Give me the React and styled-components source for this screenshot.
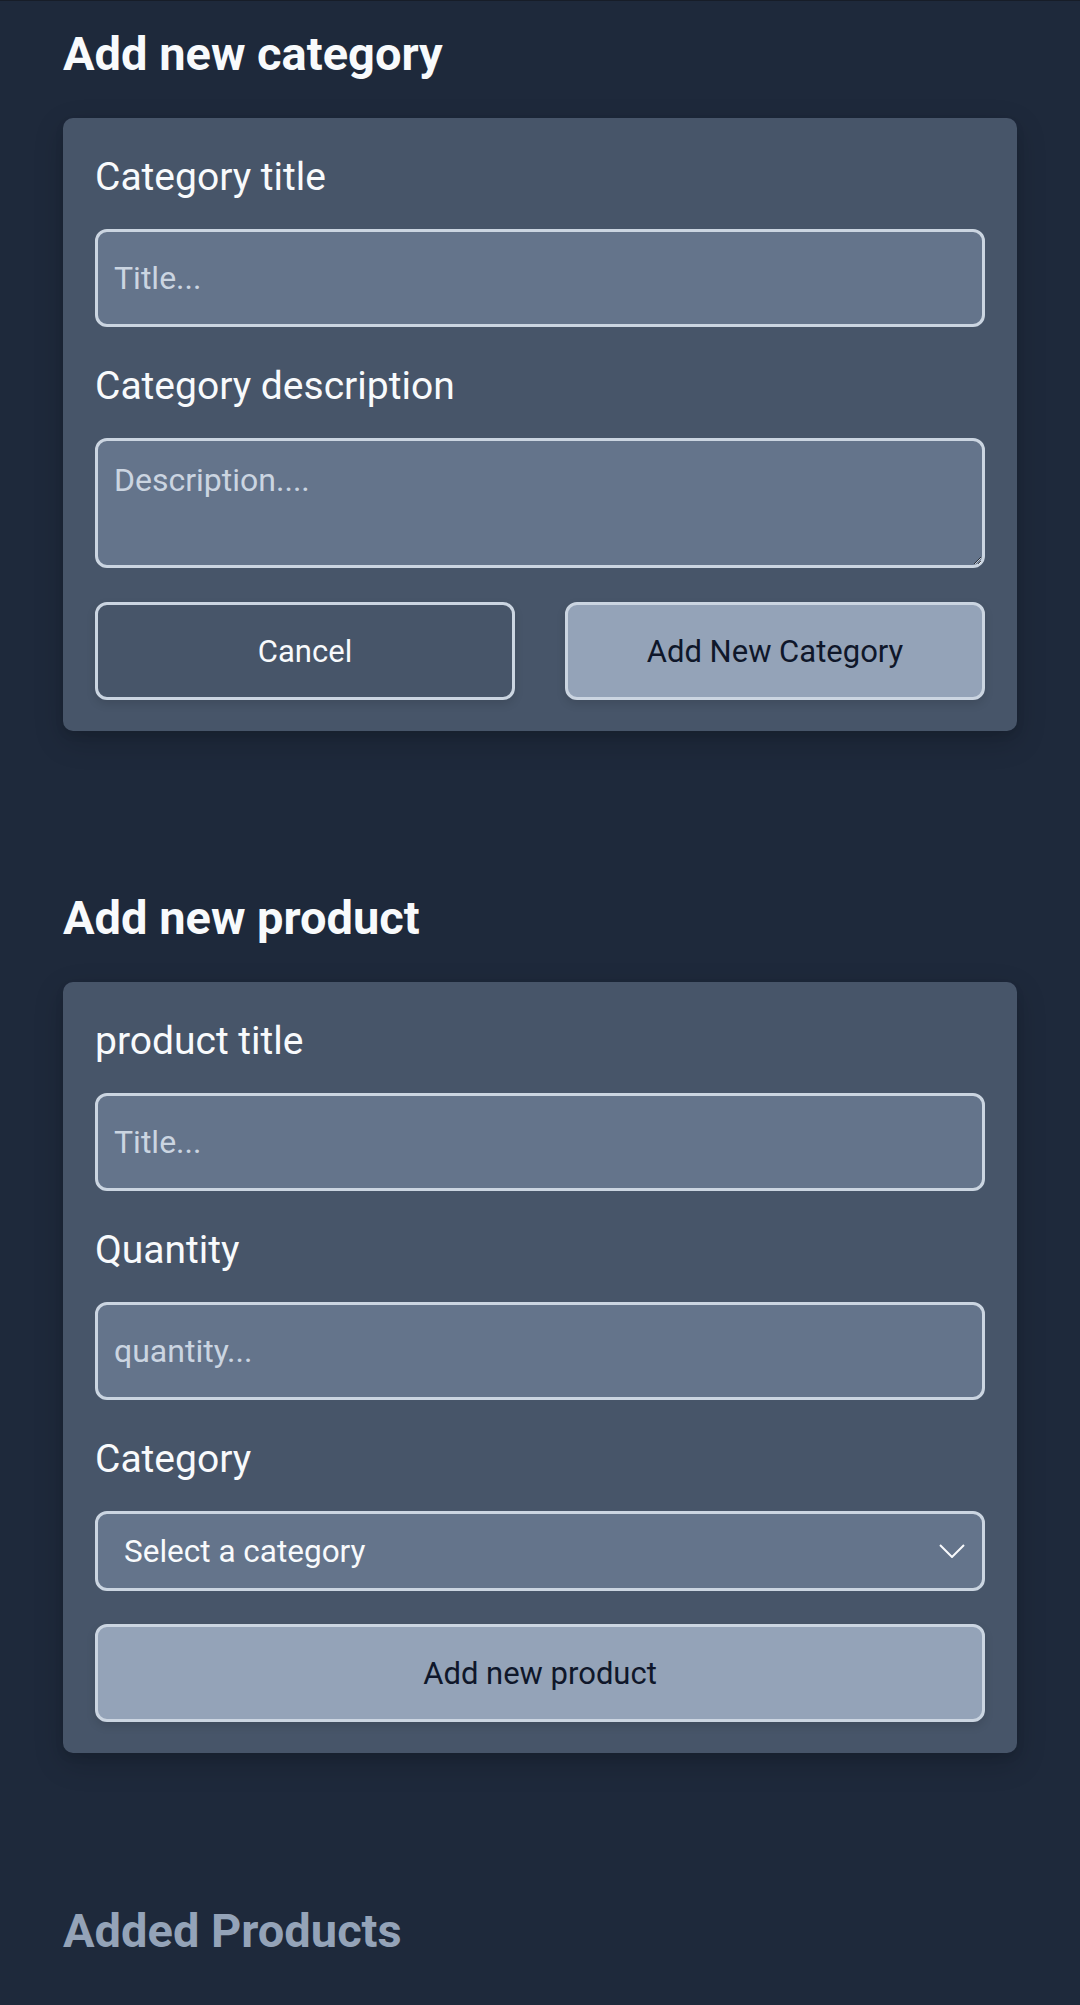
import React from 'react';
import styled, { createGlobalStyle } from 'styled-components';

const GlobalStyle = createGlobalStyle`
  html, body {
    margin: 0;
    padding: 0;
    background: #1e293b;
  }
  body {
    font-family: Roboto, "Liberation Sans", sans-serif;
    min-height: 2005px;
  }
  * {
    box-sizing: border-box;
  }
`;

const Page = styled.main`
  min-height: 2005px;
  background: #1e293b;
  border-top: 1px solid #171d28;
  padding: 25px 63px 40px;
`;

const Section = styled.section`
  margin-bottom: ${({ $space }) => $space || 0}px;
`;

const Heading = styled.h2`
  margin: 0 0 36px;
  font-size: 47px;
  line-height: 56px;
  font-weight: 700;
  color: ${({ $muted }) => ($muted ? '#94a3b8' : '#f8fafc')};
`;

const Card = styled.form`
  display: flex;
  flex-direction: column;
  gap: 31px;
  padding: 31px 32px 31px;
  background: #475569;
  border-radius: 10px;
  box-shadow: 0 10px 30px rgba(0, 0, 0, 0.18), 0 4px 8px rgba(0, 0, 0, 0.08);
`;

const Field = styled.div`
  display: flex;
  flex-direction: column;
  gap: 24px;
`;

const Label = styled.label`
  font-size: 39px;
  line-height: 56px;
  color: #f8fafc;
`;

const inputBase = `
  width: 100%;
  margin: 0;
  font-family: Roboto, "Liberation Sans", sans-serif;
  color: #f8fafc;
  background: #64748b;
  border: 3px solid #cbd5e1;
  border-radius: 12px;
  outline: none;
`;

const TextInput = styled.input`
  ${inputBase}
  height: 98px;
  padding: 0 16px;
  font-size: 32px;

  &::placeholder {
    color: #cbd5e1;
  }
`;

const TextArea = styled.textarea`
  ${inputBase}
  display: block;
  height: 130px;
  padding: 20px 16px 12px;
  font-size: 32px;
  line-height: 38px;
  resize: vertical;

  &::placeholder {
    color: #cbd5e1;
  }
`;

const SelectWrap = styled.div`
  position: relative;
`;

const Select = styled.select`
  ${inputBase}
  display: block;
  height: 80px;
  padding: 0 70px 0 26px;
  font-size: 31.5px;
  appearance: none;
  -webkit-appearance: none;
`;

const Chevron = styled.svg`
  position: absolute;
  right: 20px;
  top: 50%;
  width: 26px;
  height: 14px;
  transform: translateY(-50%);
  pointer-events: none;
`;

const ButtonRow = styled.div`
  display: grid;
  grid-template-columns: 1fr 1fr;
  gap: 50px;
  margin-top: 3px;
`;

const Button = styled.button`
  height: 98px;
  width: 100%;
  font-family: Roboto, "Liberation Sans", sans-serif;
  font-size: 31px;
  border: 3px solid #cbd5e1;
  border-radius: 12px;
  cursor: pointer;
  color: ${({ $primary }) => ($primary ? '#0f172a' : '#f8fafc')};
  background: ${({ $primary }) => ($primary ? '#94a3b8' : '#475569')};
  box-shadow: 0 4px 10px rgba(0, 0, 0, 0.12);
`;

const WideButton = styled(Button)`
  margin-top: 2px;
`;

export default function App() {
  return (
    <>
      <GlobalStyle />
      <Page>
        <Section $space={159}>
          <Heading>Add new category</Heading>
          <Card onSubmit={(e) => e.preventDefault()}>
            <Field>
              <Label htmlFor="cat-title">Category title</Label>
              <TextInput id="cat-title" type="text" placeholder="Title..." />
            </Field>
            <Field>
              <Label htmlFor="cat-desc">Category description</Label>
              <TextArea id="cat-desc" placeholder="Description...." />
            </Field>
            <ButtonRow>
              <Button type="button">Cancel</Button>
              <Button type="submit" $primary>Add New Category</Button>
            </ButtonRow>
          </Card>
        </Section>

        <Section $space={150}>
          <Heading>Add new product</Heading>
          <Card onSubmit={(e) => e.preventDefault()}>
            <Field>
              <Label htmlFor="prod-title">product title</Label>
              <TextInput id="prod-title" type="text" placeholder="Title..." />
            </Field>
            <Field>
              <Label htmlFor="prod-qty">Quantity</Label>
              <TextInput id="prod-qty" type="number" placeholder="quantity..." />
            </Field>
            <Field>
              <Label htmlFor="prod-cat">Category</Label>
              <SelectWrap>
                <Select id="prod-cat" defaultValue="">
                  <option value="">Select a category</option>
                </Select>
                <Chevron viewBox="0 0 26 14" fill="none" stroke="#f8fafc" strokeWidth="2">
                  <path d="M1 1l12 12L25 1" />
                </Chevron>
              </SelectWrap>
            </Field>
            <WideButton type="submit" $primary>Add new product</WideButton>
          </Card>
        </Section>

        <Section>
          <Heading $muted>Added Products</Heading>
        </Section>
      </Page>
    </>
  );
}
